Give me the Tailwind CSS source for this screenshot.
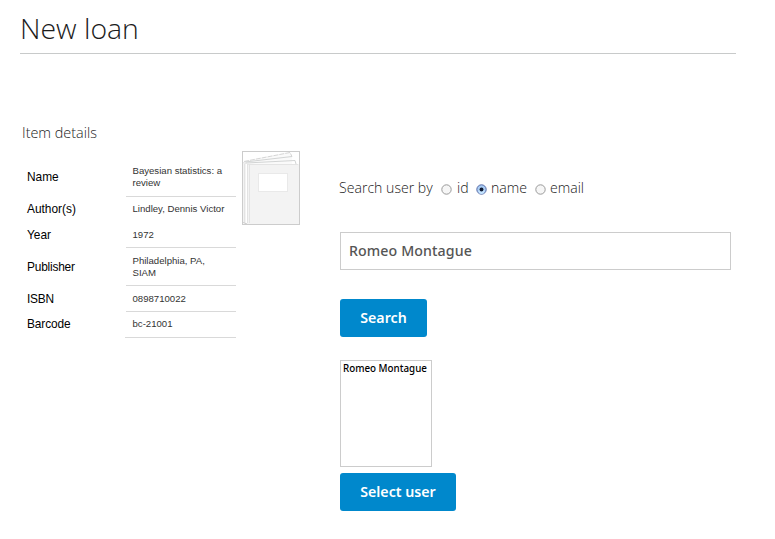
<!DOCTYPE html>
<html lang="en">
<head>
<meta charset="utf-8">
<title>New loan</title>
<script src="https://cdn.jsdelivr.net/npm/@tailwindcss/browser@4"></script>
</head>
<body class="bg-white font-['Open_Sans',sans-serif]">
<main class="w-[775px] h-[539px] overflow-hidden pl-5">
  <header class="w-[716px] h-[54px] border-b border-[#c8caca] pt-[9px]">
    <h1 class="text-[28.4px] leading-[38px] font-light text-[#1c1c1c] whitespace-nowrap"><span>New loan</span></h1>
  </header>
  <div class="flex">
    <section class="w-[320px] pt-[68px]">
      <h2 class="pl-[2px] text-[14.4px] leading-[22px] font-light text-[#222]"><span>Item details</span></h2>
      <div class="flex pt-[7px] font-['Liberation_Sans',Arial,sans-serif]">
        <dl class="mt-[7px] ml-[6px] grid grid-cols-[100px_110px] grid-rows-[39px_25px_26px_38px_26px_26px] w-[210px] text-[11.9px] text-black">
          <dt class="flex items-center pl-px"><span>Name</span></dt>
          <dd class="flex items-center border-b border-[#d9d9d9] pl-[6.500px] text-[9.6px] leading-[12px] text-[#333]"><span>Bayesian statistics: a<br>review</span></dd>
          <dt class="flex items-center pl-px"><span>Author(s)</span></dt>
          <dd class="flex items-center pl-[6.500px] text-[9.6px] text-[#333]"><span>Lindley, Dennis Victor</span></dd>
          <dt class="flex items-center pl-px pt-[2px]"><span>Year</span></dt>
          <dd class="flex items-center border-b border-[#d9d9d9] pl-[6.500px] pt-px text-[9.6px] text-[#333]"><span>1972</span></dd>
          <dt class="flex items-center pl-px pt-[2px]"><span class="tracking-[-0.2px]">Publisher</span></dt>
          <dd class="flex items-center border-b border-[#d9d9d9] pl-[6.500px] text-[9.6px] leading-[12px] text-[#333]"><span>Philadelphia, PA,<br>SIAM</span></dd>
          <dt class="flex items-center pl-px pt-[2px]"><span class="tracking-[-0.2px]">ISBN</span></dt>
          <dd class="flex items-center border-b border-[#d9d9d9] pl-[6.500px] pt-px text-[9.6px] text-[#333]"><span>0898710022</span></dd>
          <dt class="flex items-center pl-px"><span class="tracking-[-0.1px]">Barcode</span></dt>
          <dd class="flex items-center border-b border-[#d9d9d9] -ml-px pl-[7.500px] text-[9.6px] text-[#333]"><span>bc-21001</span></dd>
        </dl>
        <svg class="ml-[6px] block shrink-0" width="58" height="74" viewBox="0 0 58 74" fill="none">
          <rect x=".5" y=".5" width="57" height="73" fill="#fff" stroke="#ccc"/>
          <path d="M1 11L48 1.500L50 5V13H1Z" fill="#fafafa"/>
          <path d="M2 10.500L12 8.500L48 1.500L50 5.500" stroke="#d5d5d5" stroke-dasharray="5 1"/>
          <path d="M3 11L50 5.500M4 12L53 9.500L54 13" stroke="#d2d4d4"/>
          <path d="M1 11L7 13H57V73H4L1 71Z" fill="#f3f3f3"/>
          <path d="M1 11.500L7 13.500H56" stroke="#e4e4e4"/>
          <path d="M2.500 13V72M5.500 13V72M7.500 13V72" stroke="#e3e3e3"/>
          <path d="M4.500 13V72" stroke="#fff"/>
          <path d="M1 71.500L5 73" stroke="#ccc"/>
          <rect x="16.500" y="22.500" width="29" height="18" fill="#fff" stroke="#e9e9e9"/>
        </svg>
      </div>
    </section>
    <form class="w-[392px] pt-[122px] flex flex-col items-start">
      <div class="flex items-center h-[24px] text-[14.1px] font-light text-[#222] whitespace-nowrap">
        <span class="w-[102px] -ml-px">Search user by</span>
        <svg class="mt-[2px] mr-[5px]" width="11" height="11" viewBox="0 0 11 11"><circle cx="5.500" cy="5.500" r="4.700" fill="#f6f6f6" stroke="#999"/></svg>
        <span class="w-[19px]">id</span>
        <svg class="mt-[2px] mr-[4px]" width="11" height="11" viewBox="0 0 11 11"><circle cx="5.500" cy="5.500" r="4.700" fill="#a9cdf5" stroke="#596ba5"/><circle cx="5.500" cy="7" r="3" fill="#c5e4ff"/><circle cx="5.500" cy="5.500" r="2" fill="#101c35"/></svg>
        <span class="w-[44px]">name</span>
        <svg class="mt-[2px] mr-[4px]" width="11" height="11" viewBox="0 0 11 11"><circle cx="5.500" cy="5.500" r="4.700" fill="#f6f6f6" stroke="#999"/></svg>
        <span>email</span>
      </div>
      <div class="mt-[32px] w-[391px] h-[38px] border border-[#ccc] flex items-center pl-[8px] font-['Noto_Sans',sans-serif] text-[14.2px] font-medium tracking-[0.1px] text-[#555] whitespace-nowrap"><span>Romeo Montague</span></div>
      <button type="button" class="mt-[29px] w-[87px] h-[38px] rounded-[3px] bg-[#0088cc] text-white font-['Noto_Sans',sans-serif] font-semibold text-[14.2px] whitespace-nowrap"><span>Search</span></button>
      <div class="mt-[23px] w-[92px] h-[107px] border border-[#ccc] pl-[2px] pt-px font-['Noto_Sans',sans-serif] text-[9.8px] leading-[14px] font-medium text-black whitespace-nowrap"><span>Romeo Montague</span></div>
      <button type="button" class="mt-[6px] w-[116px] h-[38px] rounded-[3px] bg-[#0088cc] text-white font-['Noto_Sans',sans-serif] font-semibold text-[14.2px] whitespace-nowrap"><span>Select user</span></button>
    </form>
  </div>
</main>
</body>
</html>
